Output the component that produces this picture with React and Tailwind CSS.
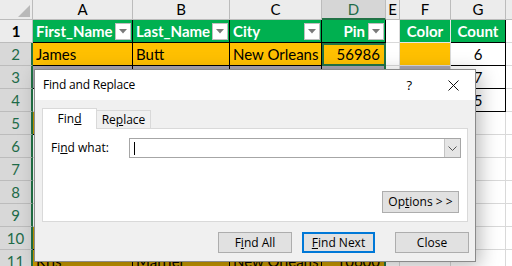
import React from "react";

const FilterBtn = () => (
  <div className="w-[16px] h-[17px] bg-white border border-[#bfbfbf] flex items-center justify-center shrink-0 mr-[1px]">
    <svg width="8" height="5" viewBox="0 0 8 5"><polygon points="0,0 8,0 4,4.5" fill="#7a7a7a" /></svg>
  </div>
);

const RowHead = ({ n, sel }) => (
  <div
    className={
      sel
        ? "w-[33px] shrink-0 h-full bg-[#d8d8d8] border-b border-[#bcbcbc] border-r-2 border-r-[#217346] flex items-center justify-center text-[#1e6b48]"
        : "w-[33px] shrink-0 h-full bg-[#ececec] border-b border-[#bcbcbc] border-r border-r-[#bcbcbc] flex items-center justify-center text-black"
    }
  >
    {n}
  </div>
);

const Gap = () => <div className="flex-1 h-full border-b border-[#d9d9d9]" />;

function EmptyRow({ n, edge }) {
  return (
    <div className="flex h-[23px]">
      <RowHead n={n} sel />
      <div className={edge ? "w-[100px] shrink-0 h-full bg-[#c99a00] border-r border-b border-black" : "w-[100px] shrink-0 h-full border-r border-b border-[#d9d9d9]"} />
      <div className="w-[97px] shrink-0 h-full border-r border-b border-[#d9d9d9]" />
      <div className="w-[92px] shrink-0 h-full border-r border-b border-[#d9d9d9]" />
      <div className="w-[64px] shrink-0 h-full border-r border-b border-[#d9d9d9]" />
      <div className="w-[14px] shrink-0 h-full border-r border-b border-[#d9d9d9]" />
      <div className="w-[51px] shrink-0 h-full border-r border-b border-[#d9d9d9]" />
      <div className="w-[55px] shrink-0 h-full border-r border-b border-[#d9d9d9]" />
      <Gap />
    </div>
  );
}

function CountRow({ n, v, strip }) {
  return (
    <div className="flex h-[23px]">
      <RowHead n={n} sel />
      <div className={strip ? "w-[100px] shrink-0 h-full bg-[#aaa6b2] border-r border-b border-black" : "w-[100px] shrink-0 h-full border-r border-b border-[#d9d9d9]"} />
      <div className={strip ? "w-[97px] shrink-0 h-full bg-[#aaa6b2] border-r border-b border-black" : "w-[97px] shrink-0 h-full border-r border-b border-[#d9d9d9]"} />
      <div className={strip ? "w-[92px] shrink-0 h-full bg-[#aaa6b2] border-r border-b border-black" : "w-[92px] shrink-0 h-full border-r border-b border-[#d9d9d9]"} />
      <div className={strip ? "w-[64px] shrink-0 h-full bg-[#aaa6b2] border-r-2 border-r-[#217346] border-b border-black" : "w-[64px] shrink-0 h-full border-r border-b border-[#d9d9d9]"} />
      <div className="w-[14px] shrink-0 h-full border-r border-b border-[#d9d9d9]" />
      <div className={strip ? "w-[51px] shrink-0 h-full bg-[#aaa6b2] border-r border-b border-[#d9d9d9]" : "w-[51px] shrink-0 h-full border-r border-b border-[#d9d9d9]"} />
      <div className="w-[55px] shrink-0 h-full border-r border-b border-black flex items-center justify-center">{v}</div>
      <Gap />
    </div>
  );
}

export default function App() {
  return (
    <div className="relative w-[512px] h-[266px] overflow-hidden bg-white font-['Lato','Liberation_Sans',sans-serif] text-[15px] leading-none text-black">
      {/* column header row */}
      <div className="flex h-[20px]">
        <div className="w-[33px] shrink-0 h-full bg-[#ececec] border-r border-b border-[#bcbcbc] relative">
          <svg className="absolute right-[2px] bottom-[2px]" width="12" height="12" viewBox="0 0 12 12"><polygon points="12,0 12,12 0,12" fill="#b9b9b9" /></svg>
        </div>
        <div className="w-[100px] shrink-0 h-full bg-[#ececec] border-r border-b border-[#bcbcbc] flex items-center justify-center">A</div>
        <div className="w-[97px] shrink-0 h-full bg-[#ececec] border-r border-b border-[#bcbcbc] flex items-center justify-center">B</div>
        <div className="w-[92px] shrink-0 h-full bg-[#ececec] border-r border-b border-[#bcbcbc] flex items-center justify-center">C</div>
        <div className="w-[64px] shrink-0 h-full bg-[#d6d6d6] border-r border-[#bcbcbc] border-b-2 border-b-[#217346] flex items-center justify-center text-[#1e6b48]">D</div>
        <div className="w-[14px] shrink-0 h-full bg-[#ececec] border-r border-b border-[#bcbcbc] flex items-center justify-center">E</div>
        <div className="w-[51px] shrink-0 h-full bg-[#ececec] border-r border-b border-[#bcbcbc] flex items-center justify-center">F</div>
        <div className="w-[55px] shrink-0 h-full bg-[#ececec] border-r border-b border-[#bcbcbc] flex items-center justify-center">G</div>
        <div className="flex-1 h-full bg-[#ececec] border-b border-[#bcbcbc]" />
      </div>

      {/* row 1 */}
      <div className="flex h-[23px] font-bold text-white">
        <RowHead n="1" />
        <div className="w-[100px] shrink-0 h-full bg-[#00b050] border-r border-b border-black flex items-center justify-between pl-[3px] overflow-hidden">
          <span className="whitespace-nowrap">First_Name</span><FilterBtn />
        </div>
        <div className="w-[97px] shrink-0 h-full bg-[#00b050] border-r border-b border-black flex items-center justify-between pl-[3px] overflow-hidden">
          <span className="whitespace-nowrap">Last_Name</span><FilterBtn />
        </div>
        <div className="w-[92px] shrink-0 h-full bg-[#00b050] border-r border-b border-black flex items-center justify-between pl-[3px] overflow-hidden">
          <span className="whitespace-nowrap">City</span><FilterBtn />
        </div>
        <div className="w-[64px] shrink-0 h-full bg-[#00b050] border-r border-b border-black flex items-center justify-end gap-[3px] overflow-hidden">
          <span className="whitespace-nowrap">Pin</span><FilterBtn />
        </div>
        <div className="w-[14px] shrink-0 h-full border-r border-b border-[#d9d9d9]" />
        <div className="w-[51px] shrink-0 h-full bg-[#00b050] border-r border-b border-[#e6e6e6] flex items-center justify-center">Color</div>
        <div className="w-[55px] shrink-0 h-full bg-[#00b050] border-r border-b border-black flex items-center justify-center">Count</div>
        <Gap />
      </div>

      {/* row 2 */}
      <div className="flex h-[23px]">
        <RowHead n="2" sel />
        <div className="w-[100px] shrink-0 h-full bg-[#ffc000] border-r border-b border-black flex items-center pl-[3px]">James</div>
        <div className="w-[97px] shrink-0 h-full bg-[#ffc000] border-r border-b border-black flex items-center pl-[3px]">Butt</div>
        <div className="w-[92px] shrink-0 h-full bg-[#ffc000] border-r border-b border-black flex items-center pl-[3px] overflow-hidden whitespace-nowrap">New Orleans</div>
        <div className="w-[64px] shrink-0 h-full bg-[#ffc000] border-2 border-[#217346] flex items-center justify-end pr-[4px]">56986</div>
        <div className="w-[14px] shrink-0 h-full border-r border-b border-[#d9d9d9]" />
        <div className="w-[51px] shrink-0 h-full bg-[#ffc000] border-r border-b border-[#d9d9d9]" />
        <div className="w-[55px] shrink-0 h-full border-r border-b border-black flex items-center justify-center">6</div>
        <Gap />
      </div>

      <CountRow n="3" v="7" strip />
      <CountRow n="4" v="5" />
      <EmptyRow n="5" edge />
      <EmptyRow n="6" />
      <EmptyRow n="7" />
      <EmptyRow n="8" />
      <EmptyRow n="9" />
      <EmptyRow n="10" edge />

      {/* row 11 */}
      <div className="flex h-[23px]">
        <RowHead n="11" sel />
        <div className="w-[100px] shrink-0 h-full bg-[#c99a00] border-r border-b border-black flex items-center pl-[3px]">Kris</div>
        <div className="w-[97px] shrink-0 h-full bg-[#c99a00] border-r border-b border-black flex items-center pl-[3px]">Marrier</div>
        <div className="w-[92px] shrink-0 h-full bg-[#c99a00] border-r border-b border-black flex items-center pl-[3px] overflow-hidden whitespace-nowrap">New Orleans</div>
        <div className="w-[64px] shrink-0 h-full bg-[#c99a00] border-r-2 border-r-[#217346] border-b border-black flex items-center justify-end pr-[4px]">10600</div>
        <div className="w-[14px] shrink-0 h-full border-r border-b border-[#d9d9d9]" />
        <div className="w-[51px] shrink-0 h-full border-r border-b border-[#d9d9d9]" />
        <div className="w-[55px] shrink-0 h-full border-r border-b border-[#d9d9d9]" />
        <Gap />
      </div>

      {/* Find and Replace dialog */}
      <div className="absolute left-[34px] top-[69px] w-[442px] h-[193px] bg-[#f0f0f0] border border-[#8a8a8a] shadow-[4px_4px_18px_rgba(0,0,0,0.28)] flex flex-col font-['Open_Sans','Noto_Sans',sans-serif] text-[12px] leading-none text-black">
        <div className="h-[30px] bg-white flex items-center pl-[8px] shrink-0">
          <span className="tracking-[-0.2px]">Find and Replace</span>
          <span className="ml-auto mr-[36px] text-[13px]">?</span>
          <svg className="mr-[16px]" width="11" height="11" viewBox="0 0 11 11"><path d="M0.5 0.5 L10.5 10.5 M10.5 0.5 L0.5 10.5" stroke="#111" strokeWidth="1" /></svg>
        </div>
        <div className="px-[7px] pt-[7px]">
          <div className="flex items-end h-[21px]">
            <div className="w-[55px] h-[21px] bg-white border border-b-0 border-[#d9d9d9] flex items-center justify-center relative z-10 mb-[-1px] pb-[1px]">
              <span>Fin<span className="underline">d</span></span>
            </div>
            <div className="w-[54px] h-[18px] bg-[#f0f0f0] border-t border-r border-[#d9d9d9] flex items-center justify-center">
              <span>Re<span className="underline">p</span>lace</span>
            </div>
          </div>
          <div className="h-[94px] bg-white border border-[#d9d9d9] flex flex-col pt-[9px]">
            <div className="flex items-center h-[20px]">
              <span className="w-[86px] pl-[8px] shrink-0">Fi<span className="underline">n</span>d what:</span>
              <div className="w-[332px] h-[20px] border border-[#a6a6a6] flex items-stretch">
                <div className="flex-1 flex items-center pl-[4px]">
                  <div className="w-px h-[13px] bg-black" />
                </div>
                <div className="w-[16px] bg-[#e5e5e5] border-l border-[#c4c4c4] flex items-center justify-center">
                  <svg width="9" height="5" viewBox="0 0 9 5"><path d="M0.5 0.5 L4.5 4.5 L8.5 0.5" fill="none" stroke="#555" strokeWidth="1" /></svg>
                </div>
              </div>
            </div>
            <div className="flex justify-end pr-[8px] mt-[33px]">
              <div className="w-[77px] h-[22px] bg-[#e1e1e1] border border-[#adadad] flex items-center justify-center">
                <span>Op<span className="underline">t</span>ions &gt; &gt;</span>
              </div>
            </div>
          </div>
        </div>
        <div className="flex justify-end pr-[6px] mt-[10px]">
          <div className="w-[74px] h-[21px] bg-[#e1e1e1] border border-[#adadad] flex items-center justify-center">
            <span>F<span className="underline">i</span>nd All</span>
          </div>
          <div className="w-[73px] h-[21px] ml-[10px] bg-[#e1e1e1] border-2 border-[#0078d7] flex items-center justify-center">
            <span><span className="underline">F</span>ind Next</span>
          </div>
          <div className="w-[74px] h-[21px] ml-[20px] bg-[#e1e1e1] border border-[#adadad] flex items-center justify-center">
            <span>Close</span>
          </div>
        </div>
      </div>
    </div>
  );
}
